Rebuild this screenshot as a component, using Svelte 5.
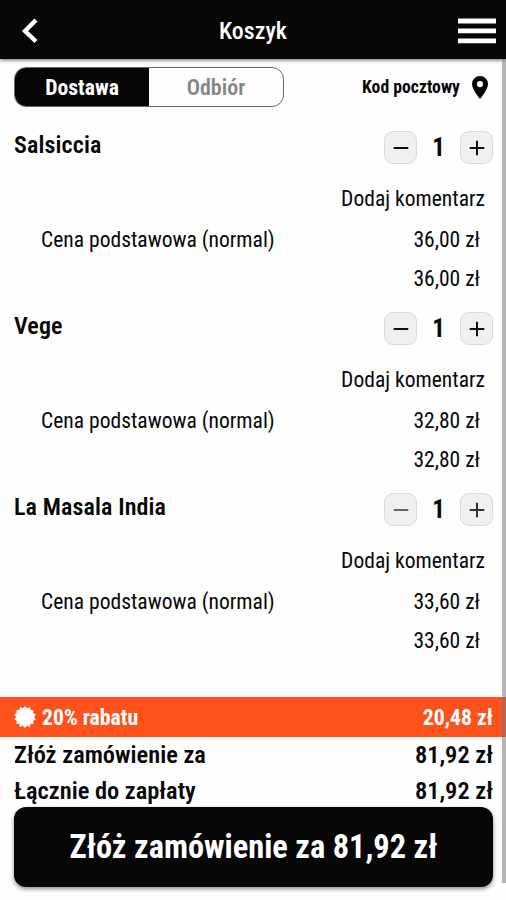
<script lang="ts">
	interface CartItem {
		name: string;
		quantity: number;
		price: number;
		muted?: boolean;
	}

	let mode = $state('delivery');
	let items: CartItem[] = $state([
		{ name: 'Salsiccia', quantity: 1, price: 36 },
		{ name: 'Vege', quantity: 1, price: 32.8 },
		{ name: 'La Masala India', quantity: 1, price: 33.6, muted: true }
	]);

	let subtotal = $derived(items.reduce((sum, item) => sum + item.price * item.quantity, 0));
	let discount = $derived(subtotal * 0.2);
	let total = $derived(subtotal - discount);

	function money(value: number) {
		return value.toFixed(2).replace('.', ',') + ' zł';
	}

	// 14-pointed badge outline
	const badge = Array.from({ length: 28 }, (_, i) => {
		const r = i % 2 ? 9 : 11;
		const a = (i * Math.PI) / 14;
		return `${(11 + r * Math.sin(a)).toFixed(2)},${(11 - r * Math.cos(a)).toFixed(2)}`;
	}).join(' ');
</script>

<div class="app">
	<header>
		<button class="icon-btn" aria-label="Wstecz">
			<svg width="16" height="26" viewBox="0 0 16 26">
				<path d="M14 2 3 13l11 10.5" fill="none" stroke="#fff" stroke-width="4.4" />
			</svg>
		</button>
		<h1>Koszyk</h1>
		<button class="icon-btn" aria-label="Menu">
			<svg width="38" height="26" viewBox="0 0 38 26">
				<path d="M0 3h38M0 12.8h38M0 22.8h38" stroke="#fff" stroke-width="4.8" />
			</svg>
		</button>
	</header>

	<div class="options">
		<div class="switch">
			<button class:active={mode === 'delivery'} onclick={() => (mode = 'delivery')}>Dostawa</button>
			<button class:active={mode === 'pickup'} onclick={() => (mode = 'pickup')}>Odbiór</button>
		</div>
		<div class="postcode">
			<span>Kod pocztowy</span>
			<svg width="16" height="23" viewBox="0 0 16 23">
				<path
					d="M8 0a8 8 0 0 0-8 8c0 5.6 8 15 8 15s8-9.4 8-15a8 8 0 0 0-8-8zm0 5a3.1 3.1 0 1 1 0 6.2A3.1 3.1 0 0 1 8 5z"
					fill="#060606"
				/>
			</svg>
		</div>
	</div>

	<main>
		{#each items as item}
			<section class="item">
				<div class="item-head">
					<h2>{item.name}</h2>
					<div class="stepper">
						<button
							class:muted={item.muted}
							aria-label="Mniej"
							onclick={() => (item.quantity = Math.max(0, item.quantity - 1))}
						>
							<svg width="16" height="16" viewBox="0 0 16 16"><path d="M.7 8h14.6" /></svg>
						</button>
						<span>{item.quantity}</span>
						<button class:soft={item.muted} aria-label="Więcej" onclick={() => (item.quantity += 1)}>
							<svg width="16" height="16" viewBox="0 0 16 16"><path d="M.7 8h14.6M8 .7v14.6" /></svg>
						</button>
					</div>
				</div>
				<div class="comment"><span>Dodaj komentarz</span></div>
				<div class="line">
					<span class="label">Cena podstawowa (normal)</span>
					<span class="price">{money(item.price)}</span>
				</div>
				<div class="line sum"><span class="price">{money(item.price * item.quantity)}</span></div>
			</section>
		{/each}
	</main>

	<footer>
		<div class="discount">
			<svg width="22" height="22" viewBox="0 0 22 22"><polygon points={badge} fill="#fff" /></svg>
			<span>20% rabatu</span>
			<span class="amount">{money(discount)}</span>
		</div>
		<div class="total"><span>Złóż zamówienie za</span><b>{money(total)}</b></div>
		<div class="total"><span>Łącznie do zapłaty</span><b>{money(total)}</b></div>
		<button class="order">Złóż zamówienie za {money(total)}</button>
	</footer>

	<div class="scrollbar"></div>
</div>

<style>
	:global(body) {
		background: #fff;
	}

	.app {
		position: relative;
		display: flex;
		flex-direction: column;
		box-sizing: border-box;
		height: 900px;
		overflow: hidden;
		background: #fefefe;
		color: #080808;
		font-family: 'Roboto Condensed', Roboto, sans-serif;
		font-stretch: 75%;
		font-size: 21.55px;
		white-space: nowrap;
	}

	button {
		padding: 0;
		border: none;
		background: none;
		color: inherit;
		font: inherit;
		letter-spacing: inherit;
		cursor: pointer;
	}

	svg {
		display: block;
	}

	h1,
	h2 {
		margin: 0;
	}

	header {
		position: relative;
		flex: none;
		display: grid;
		grid-template-columns: 70px 1fr 70px;
		align-items: center;
		height: 59px;
		padding: 2px 10px 0;
		box-sizing: border-box;
		background: #070707;
		color: #fff;
		box-shadow: 0 1px 4px rgba(0, 0, 0, 0.6);
	}

	header .icon-btn:last-child {
		justify-self: end;
	}

	header .icon-btn:first-child {
		justify-self: start;
		margin-left: 12px;
	}

	h1 {
		font-size: 24px;
		font-weight: 500;
		text-align: center;
	}

	.options {
		flex: none;
		display: flex;
		justify-content: space-between;
		height: 40px;
		padding: 8px 18px 0 14px;
	}

	.switch {
		display: flex;
		width: 270px;
		box-sizing: border-box;
		border: 1px solid #666;
		border-radius: 12px;
		overflow: hidden;
	}

	.switch button {
		flex: 1;
		color: #858585;
		font-size: 22px;
		font-weight: 600;
	}

	.switch .active {
		background: #060606;
		color: #fff;
		font-size: 21.7px;
		font-weight: 700;
	}

	.postcode {
		display: flex;
		align-items: center;
		gap: 12px;
		font-size: 17.7px;
		font-weight: 700;
	}

	main {
		flex: 1;
		padding-top: 20px;
	}

	.item {
		height: 181px;
		box-sizing: border-box;
		padding-top: 4px;
	}

	.item-head {
		display: flex;
		justify-content: space-between;
		height: 33px;
		padding: 0 13px 0 14px;
	}

	h2 {
		font-size: 24px;
		font-weight: 600;
		line-height: 28px;
		letter-spacing: 0.12px;
	}

	.stepper {
		display: flex;
		align-items: center;
		font-size: 25px;
		font-weight: 700;
	}

	.stepper span {
		width: 43px;
		text-align: center;
	}

	.stepper button {
		display: flex;
		align-items: center;
		justify-content: center;
		width: 33px;
		height: 33px;
		box-sizing: border-box;
		border: 1px solid #dadada;
		border-radius: 9px;
		background: #f0f0f0;
	}

	.stepper path {
		stroke: #111;
		stroke-width: 2;
	}

	.stepper .muted path {
		stroke: #666;
	}

	.stepper .soft path {
		stroke: #333;
	}

	.comment {
		padding: 15px 21px 0 0;
		line-height: 40px;
		text-align: right;
	}

	.line {
		display: flex;
		padding: 0 26px 0 41px;
		line-height: 41px;
	}

	.sum {
		line-height: 38px;
	}

	.price {
		margin-left: auto;
	}

	.discount {
		display: flex;
		align-items: center;
		gap: 6px;
		height: 40px;
		padding: 0 13px 0 14px;
		background: #fd521c;
		color: #fff;
		font-size: 21.7px;
		font-weight: 700;
	}

	.amount {
		margin-left: auto;
	}

	.total {
		display: flex;
		justify-content: space-between;
		padding: 0 13px 0 14px;
		font-size: 24.4px;
		font-weight: 600;
		line-height: 36px;
	}

	.total b {
		font-weight: 600;
	}

	footer {
		flex: none;
		display: flex;
		flex-direction: column;
		height: 203px;
	}

	.order {
		height: 80px;
		margin: -2px 13px 0 14px;
		border-radius: 12px;
		background: #070707;
		color: #fff;
		font-size: 32.4px;
		font-weight: 700;
		box-shadow: 0 2px 4px rgba(0, 0, 0, 0.45);
	}

	/* overlay scrollbar, drawn on top of the page */
	.scrollbar {
		position: absolute;
		top: 59px;
		right: 0;
		width: 4px;
		height: 824px;
		background: rgba(120, 120, 120, 0.55);
	}
</style>
